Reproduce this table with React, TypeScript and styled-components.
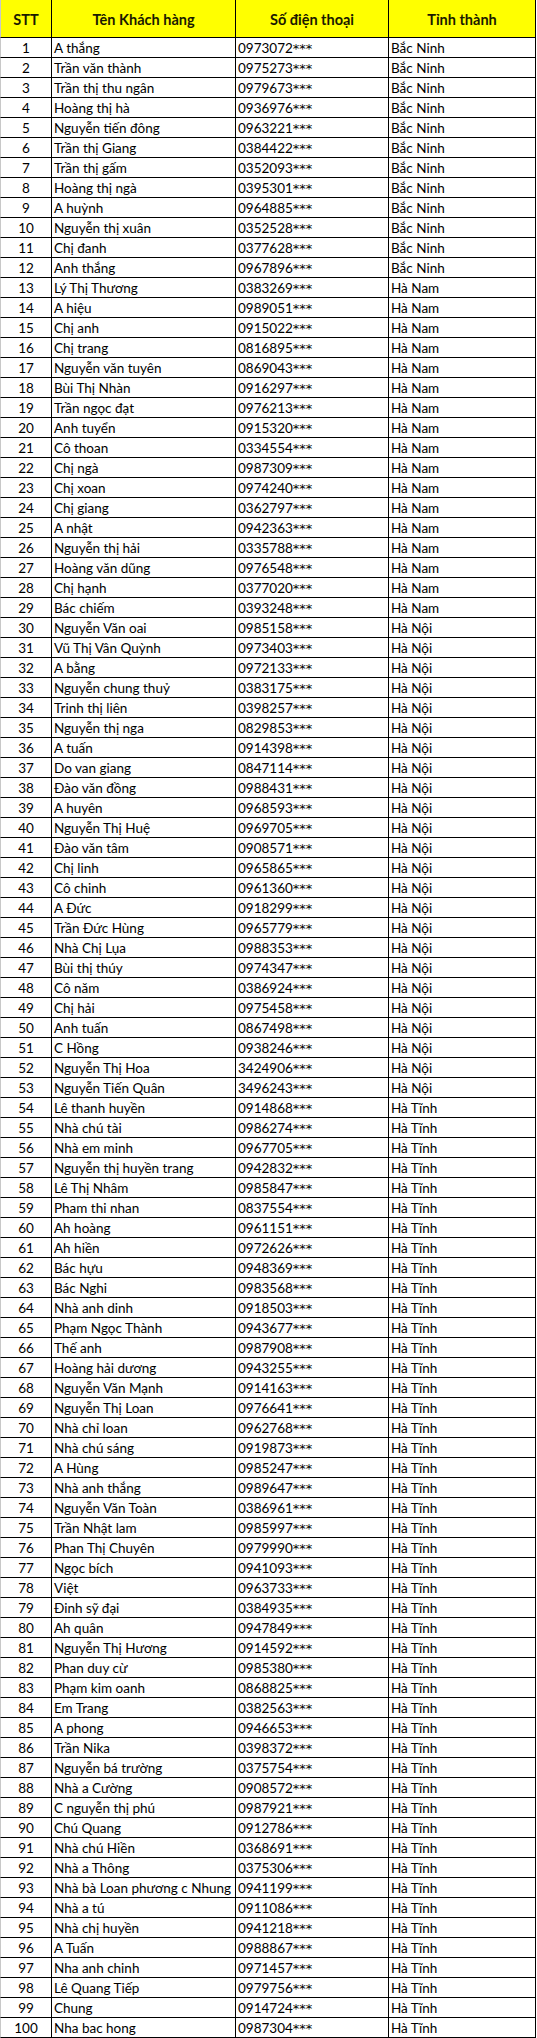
import React from "react";
import styled, { createGlobalStyle } from "styled-components";

const GlobalStyle = createGlobalStyle`
  html, body {
    margin: 0;
    padding: 0;
    background: #ffffff;
  }
  body {
    font-family: "Lato", "Open Sans", "Liberation Sans", sans-serif;
    color: #000000;
  }
`;

type Customer = [string, string, string];

const BN = "Bắc Ninh";
const HN = "Hà Nam";
const HNI = "Hà Nội";
const HT = "Hà Tĩnh";

const customers: Customer[] = [
  ["A thắng", "0973072", BN],
  ["Trần văn thành", "0975273", BN],
  ["Trần thị thu ngân", "0979673", BN],
  ["Hoàng thị hà", "0936976", BN],
  ["Nguyễn tiến đông", "0963221", BN],
  ["Trần thị Giang", "0384422", BN],
  ["Trần thị gấm", "0352093", BN],
  ["Hoàng thị ngà", "0395301", BN],
  ["A huỳnh", "0964885", BN],
  ["Nguyễn thị xuân", "0352528", BN],
  ["Chị đanh", "0377628", BN],
  ["Anh thắng", "0967896", BN],
  ["Lý Thị Thương", "0383269", HN],
  ["A hiệu", "0989051", HN],
  ["Chị anh", "0915022", HN],
  ["Chị trang", "0816895", HN],
  ["Nguyễn văn tuyên", "0869043", HN],
  ["Bùi Thị Nhàn", "0916297", HN],
  ["Trần ngọc đạt", "0976213", HN],
  ["Anh tuyển", "0915320", HN],
  ["Cô thoan", "0334554", HN],
  ["Chị ngà", "0987309", HN],
  ["Chị xoan", "0974240", HN],
  ["Chị giang", "0362797", HN],
  ["A nhật", "0942363", HN],
  ["Nguyễn thị hải", "0335788", HN],
  ["Hoàng văn dũng", "0976548", HN],
  ["Chị hạnh", "0377020", HN],
  ["Bác chiếm", "0393248", HN],
  ["Nguyễn Văn oai", "0985158", HNI],
  ["Vũ Thị Vân Quỳnh", "0973403", HNI],
  ["A bằng", "0972133", HNI],
  ["Nguyễn chung thuỷ", "0383175", HNI],
  ["Trinh thị liên", "0398257", HNI],
  ["Nguyễn thị nga", "0829853", HNI],
  ["A tuấn", "0914398", HNI],
  ["Do van giang", "0847114", HNI],
  ["Đào văn đồng", "0988431", HNI],
  ["A huyên", "0968593", HNI],
  ["Nguyễn Thị Huệ", "0969705", HNI],
  ["Đào văn tâm", "0908571", HNI],
  ["Chị linh", "0965865", HNI],
  ["Cô chinh", "0961360", HNI],
  ["A Đức", "0918299", HNI],
  ["Trần Đức Hùng", "0965779", HNI],
  ["Nhà Chị Lụa", "0988353", HNI],
  ["Bùi thị thúy", "0974347", HNI],
  ["Cô năm", "0386924", HNI],
  ["Chị hải", "0975458", HNI],
  ["Anh tuấn", "0867498", HNI],
  ["C Hồng", "0938246", HNI],
  ["Nguyễn Thị Hoa", "3424906", HNI],
  ["Nguyễn Tiến Quân", "3496243", HNI],
  ["Lê thanh huyền", "0914868", HT],
  ["Nhà chú tài", "0986274", HT],
  ["Nhà em minh", "0967705", HT],
  ["Nguyễn thị huyền trang", "0942832", HT],
  ["Lê Thị Nhâm", "0985847", HT],
  ["Pham thi nhan", "0837554", HT],
  ["Ah hoàng", "0961151", HT],
  ["Ah hiền", "0972626", HT],
  ["Bác hựu", "0948369", HT],
  ["Bác Nghi", "0983568", HT],
  ["Nhà anh dinh", "0918503", HT],
  ["Phạm Ngọc Thành", "0943677", HT],
  ["Thế anh", "0987908", HT],
  ["Hoàng hải dương", "0943255", HT],
  ["Nguyễn Văn Mạnh", "0914163", HT],
  ["Nguyễn Thị Loan", "0976641", HT],
  ["Nhà chỉ loan", "0962768", HT],
  ["Nhà chú sáng", "0919873", HT],
  ["A Hùng", "0985247", HT],
  ["Nhà anh thắng", "0989647", HT],
  ["Nguyễn Văn Toàn", "0386961", HT],
  ["Trần Nhật lam", "0985997", HT],
  ["Phan Thị Chuyên", "0979990", HT],
  ["Ngọc bích", "0941093", HT],
  ["Việt", "0963733", HT],
  ["Đinh sỹ đại", "0384935", HT],
  ["Ah quân", "0947849", HT],
  ["Nguyễn Thị Hương", "0914592", HT],
  ["Phan duy cừ", "0985380", HT],
  ["Phạm kim oanh", "0868825", HT],
  ["Em Trang", "0382563", HT],
  ["A phong", "0946653", HT],
  ["Trần Nika", "0398372", HT],
  ["Nguyễn bá trường", "0375754", HT],
  ["Nhà a Cường", "0908572", HT],
  ["C nguyễn thị phú", "0987921", HT],
  ["Chú Quang", "0912786", HT],
  ["Nhà chú Hiền", "0368691", HT],
  ["Nhà a Thông", "0375306", HT],
  ["Nhà bà Loan phương c Nhung", "0941199", HT],
  ["Nhà a tú", "0911086", HT],
  ["Nhà chị huyền", "0941218", HT],
  ["A Tuấn", "0988867", HT],
  ["Nha anh chinh", "0971457", HT],
  ["Lê Quang Tiếp", "0979756", HT],
  ["Chung", "0914724", HT],
  ["Nha bac hong", "0987304", HT],
];

const Sheet = styled.div`
  width: 536px;
  display: flex;
  flex-direction: column;
`;

const HeaderRow = styled.div`
  display: grid;
  grid-template-columns: 51px 184px 153px 147px;
  height: 38px;
  border-left: 1px solid #c8c8c8;
  border-bottom: 1px solid #000000;
  box-sizing: border-box;
  width: 536px;
  background: #ffff00;
`;

const HeaderCell = styled.div`
  box-sizing: border-box;
  border-right: 1px solid #000000;
  display: flex;
  align-items: center;
  justify-content: center;
  padding-top: 1px;
  font-weight: 700;
  font-size: 14.5px;
  color: #1a1a00;
  white-space: nowrap;
`;

const Row = styled.div`
  display: grid;
  grid-template-columns: 51px 184px 153px 147px;
  height: 20px;
  border-left: 1px solid #c8c8c8;
  border-bottom: 1px solid #000000;
  box-sizing: border-box;
  width: 536px;
  background: #ffffff;
`;

const Cell = styled.div<{ $center?: boolean }>`
  box-sizing: border-box;
  border-right: 1px solid #000000;
  display: flex;
  align-items: flex-end;
  justify-content: ${(p) => (p.$center ? "center" : "flex-start")};
  padding-left: ${(p) => (p.$center ? "0" : "2px")};
  font-size: 13.5px;
  line-height: 19px;
  padding-top: 1px;
  color: #000000;
  white-space: nowrap;
  overflow: visible;
`;

const Mask = styled.span`
  font-family: "DejaVu Sans", "Liberation Sans", sans-serif;
  font-size: 13px;
`;

export default function App() {
  return (
    <>
      <GlobalStyle />
      <Sheet role="table">
        <HeaderRow role="row">
          <HeaderCell role="columnheader">STT</HeaderCell>
          <HeaderCell role="columnheader">Tên Khách hàng</HeaderCell>
          <HeaderCell role="columnheader">Số điện thoại</HeaderCell>
          <HeaderCell role="columnheader">Tỉnh thành</HeaderCell>
        </HeaderRow>
        {customers.map(([name, phone, province], i) => (
          <Row role="row" key={i}>
            <Cell role="cell" $center>
              {i + 1}
            </Cell>
            <Cell role="cell">{name}</Cell>
            <Cell role="cell">
              {phone}
              <Mask>***</Mask>
            </Cell>
            <Cell role="cell">{province}</Cell>
          </Row>
        ))}
      </Sheet>
    </>
  );
}
